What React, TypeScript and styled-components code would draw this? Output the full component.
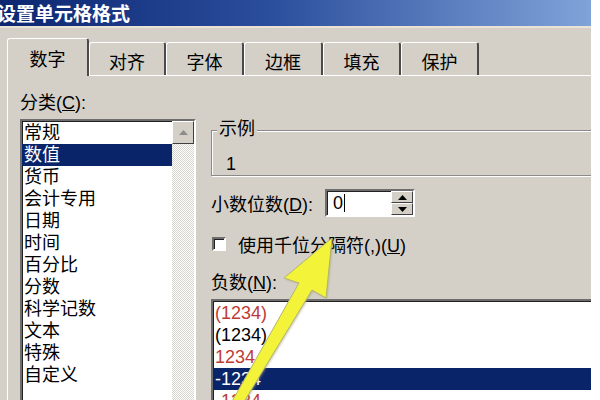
import React from "react";
import styled, { createGlobalStyle } from "styled-components";

const Global = createGlobalStyle`
  html, body { margin: 0; padding: 0; background: #ffffff; }
  body { font-family: "Liberation Sans", "Noto Sans CJK SC", sans-serif; }
`;

const Window = styled.div`
  position: relative;
  width: 591px;
  height: 400px;
  overflow: hidden;
  background: #d4d0c8;
  display: flex;
  flex-direction: column;
  font-family: "Liberation Sans", "Noto Sans CJK SC", sans-serif;
  font-size: 18px;
  color: #000;
`;

const TitleBar = styled.div`
  flex: none;
  height: 26px;
  background: linear-gradient(90deg, #0c2670 0%, #2a4d9c 45%, #80a3d9 100%);
  border-bottom: 2px solid #ebe2d6;
  display: flex;
  align-items: center;
`;

const Title = styled.span`
  margin-left: -3px;
  color: #fff;
  font-weight: 700;
  font-size: 19px;
  line-height: 26px;
  font-family: "Noto Sans CJK SC", sans-serif;
`;

const Body = styled.div`
  flex: 1;
  min-height: 0;
  display: flex;
  flex-direction: column;
  padding: 10px 0 0 7px;
`;

const TabRow = styled.div`
  flex: none;
  height: 37px;
  display: flex;
  align-items: flex-end;
  position: relative;
  z-index: 1;
`;

const Tab = styled.div<{ $w: number; $active?: boolean }>`
  box-sizing: border-box;
  width: ${(p) => p.$w}px;
  height: ${(p) => (p.$active ? 38 : 33)}px;
  margin-bottom: ${(p) => (p.$active ? -1 : 0)}px;
  padding-top: ${(p) => (p.$active ? 0 : 3)}px;
  background: #d4d0c8;
  border-top: 1px solid #fff;
  border-left: 1px solid #fff;
  border-right: 2px solid #4a4a4a;
  border-radius: 3px 3px 0 0;
  display: flex;
  align-items: center;
  justify-content: center;
  font-family: "Noto Sans CJK SC", sans-serif;
  font-size: 18px;
`;

const Panel = styled.div`
  flex: 1;
  min-height: 0;
  border-top: 1px solid #fff;
  border-left: 1px solid #fff;
  display: flex;
  gap: 15px;
  padding: 16px 0 0 12px;
`;

const LeftCol = styled.div`
  flex: none;
  width: 176px;
  display: flex;
  flex-direction: column;
`;

const Label = styled.div<{ $mt?: number }>`
  height: 22px;
  line-height: 22px;
  margin-top: ${(p) => p.$mt ?? 0}px;
  margin-bottom: 5px;
  white-space: nowrap;
`;

const ListBox = styled.div`
  box-sizing: border-box;
  flex: 1;
  min-height: 320px;
  background: #fff;
  border-style: solid;
  border-width: 2px;
  border-color: #6e6e6e #fff #fff #6e6e6e;
  box-shadow: inset 1px 1px 0 #202020;
  display: flex;
`;

const Items = styled.div`
  flex: 1;
  display: flex;
  flex-direction: column;
  padding-top: 1px;
`;

const Item = styled.div<{ $selected?: boolean; $red?: boolean }>`
  height: 22px;
  line-height: 22px;
  padding-left: 2px;
  white-space: nowrap;
  background: ${(p) => (p.$selected ? "#0a246a" : "transparent")};
  color: ${(p) => (p.$selected ? "#fff" : p.$red ? "#c03a34" : "#000")};
`;

const ScrollBar = styled.div`
  flex: none;
  width: 22px;
  display: flex;
  flex-direction: column;
  background-color: #f2f0ec;
  background-image: repeating-conic-gradient(#d8d5cf 0 25%, #ffffff 0 50%);
  background-size: 2px 2px;
`;

const ScrollBtn = styled.div`
  box-sizing: border-box;
  width: 22px;
  height: 23px;
  background: #d4d0c8;
  border-style: solid;
  border-width: 1px;
  border-color: #fff #404040 #404040 #fff;
  display: flex;
  align-items: center;
  justify-content: center;
`;

const RightCol = styled.div`
  flex: none;
  width: 400px;
  display: flex;
  flex-direction: column;
`;

const GroupBox = styled.div`
  position: relative;
  box-sizing: border-box;
  margin-top: 38px;
  height: 50px;
  border: 1px solid #8a8a8a;
  box-shadow: inset 1px 1px 0 #fff, 1px 1px 0 #fff;
  padding: 22px 0 0 14px;
  line-height: 22px;
`;

const Legend = styled.span`
  position: absolute;
  top: -13px;
  left: 5px;
  padding: 0 2px;
  background: #d4d0c8;
  line-height: 22px;
`;

const DecimalRow = styled.div`
  margin-top: 13px;
  height: 28px;
  display: flex;
  align-items: center;
  gap: 12px;
`;

const SpinBox = styled.div`
  box-sizing: border-box;
  width: 90px;
  height: 28px;
  background: #fff;
  border-style: solid;
  border-width: 2px;
  border-color: #6e6e6e #fff #fff #6e6e6e;
  box-shadow: inset 1px 1px 0 #202020;
  display: flex;
`;

const SpinText = styled.div`
  flex: 1;
  display: flex;
  align-items: center;
  padding-left: 6px;
  line-height: 22px;
`;

const Caret = styled.span`
  display: inline-block;
  width: 1px;
  height: 18px;
  margin-left: 1px;
  background: #000;
`;

const SpinButtons = styled.div`
  flex: none;
  width: 22px;
  display: flex;
  flex-direction: column;
`;

const SpinBtn = styled.div`
  box-sizing: border-box;
  flex: 1;
  background: #d4d0c8;
  border-style: solid;
  border-width: 1px;
  border-color: #fff #404040 #404040 #fff;
  display: flex;
  align-items: center;
  justify-content: center;
`;

const CheckRow = styled.div`
  margin-top: 18px;
  height: 18px;
  display: flex;
  align-items: center;
  gap: 12px;
  white-space: nowrap;
  padding-left: 1px;
`;

const CheckBox = styled.span`
  box-sizing: border-box;
  width: 14px;
  height: 14px;
  background: #fff;
  border-style: solid;
  border-width: 2px;
  border-color: #6e6e6e #fff #fff #6e6e6e;
  box-shadow: inset 1px 1px 0 #202020;
`;

const NegList = styled(ListBox)`
  min-height: 120px;
  flex: none;
  height: 120px;
`;

const Overlay = styled.svg`
  position: absolute;
  left: 0;
  top: 0;
  pointer-events: none;
`;

const categories = ["常规", "数值", "货币", "会计专用", "日期", "时间", "百分比", "分数", "科学记数", "文本", "特殊", "自定义"];
const tabs: { label: string; w: number }[] = [
  { label: "数字", w: 82 },
  { label: "对齐", w: 77 },
  { label: "字体", w: 78 },
  { label: "边框", w: 79 },
  { label: "填充", w: 78 },
  { label: "保护", w: 78 },
];
const negatives: { text: string; red?: boolean; selected?: boolean }[] = [
  { text: "(1234)", red: true },
  { text: "(1234)" },
  { text: "1234", red: true },
  { text: "-1234", selected: true },
  { text: "-1234", red: true },
];

export default function App() {
  return (
    <>
      <Global />
      <Window>
        <TitleBar>
          <Title>设置单元格格式</Title>
        </TitleBar>
        <Body>
          <TabRow>
            {tabs.map((t, i) => (
              <Tab key={t.label} $w={t.w} $active={i === 0}>
                {t.label}
              </Tab>
            ))}
          </TabRow>
          <Panel>
            <LeftCol>
              <Label>分类(<u>C</u>):</Label>
              <ListBox>
                <Items>
                  {categories.map((c, i) => (
                    <Item key={c} $selected={i === 1}>
                      {c}
                    </Item>
                  ))}
                </Items>
                <ScrollBar>
                  <ScrollBtn>
                    <svg width="9" height="5" viewBox="0 0 9 5">
                      <path d="M0 5 L4.5 0 L9 5 Z" fill="#8c8c8c" />
                    </svg>
                  </ScrollBtn>
                </ScrollBar>
              </ListBox>
            </LeftCol>
            <RightCol>
              <GroupBox>
                <Legend>示例</Legend>1
              </GroupBox>
              <DecimalRow>
                <span>小数位数(<u>D</u>):</span>
                <SpinBox>
                  <SpinText>
                    0<Caret />
                  </SpinText>
                  <SpinButtons>
                    <SpinBtn>
                      <svg width="9" height="5" viewBox="0 0 9 5">
                        <path d="M0 5 L4.5 0 L9 5 Z" fill="#000" />
                      </svg>
                    </SpinBtn>
                    <SpinBtn>
                      <svg width="9" height="5" viewBox="0 0 9 5">
                        <path d="M0 0 L4.5 5 L9 0 Z" fill="#000" />
                      </svg>
                    </SpinBtn>
                  </SpinButtons>
                </SpinBox>
              </DecimalRow>
              <CheckRow>
                <CheckBox />
                <span>使用千位分隔符(,)(<u>U</u>)</span>
              </CheckRow>
              <Label $mt={19}>负数(<u>N</u>):</Label>
              <NegList>
                <Items>
                  {negatives.map((n, i) => (
                    <Item key={i} $red={n.red} $selected={n.selected}>
                      {n.text}
                    </Item>
                  ))}
                </Items>
              </NegList>
            </RightCol>
          </Panel>
        </Body>
        <Overlay width="591" height="400" viewBox="0 0 591 400">
          <defs>
            <filter id="glow" x="-20%" y="-20%" width="140%" height="140%">
              <feGaussianBlur stdDeviation="1.2" />
            </filter>
          </defs>
          <polygon
            points="332,238 326,298 312,290 242,405 230,405 299,283 284,278"
            fill="#9a9a6a"
            opacity="0.6"
            filter="url(#glow)"
            transform="translate(1,1)"
          />
          <polygon
            points="332,238 326,298 312,290 242,405 230,405 299,283 284,278"
            fill="#f3f33a"
            stroke="#b4b470"
            strokeWidth="1"
            strokeLinejoin="round"
          />
        </Overlay>
      </Window>
    </>
  );
}
